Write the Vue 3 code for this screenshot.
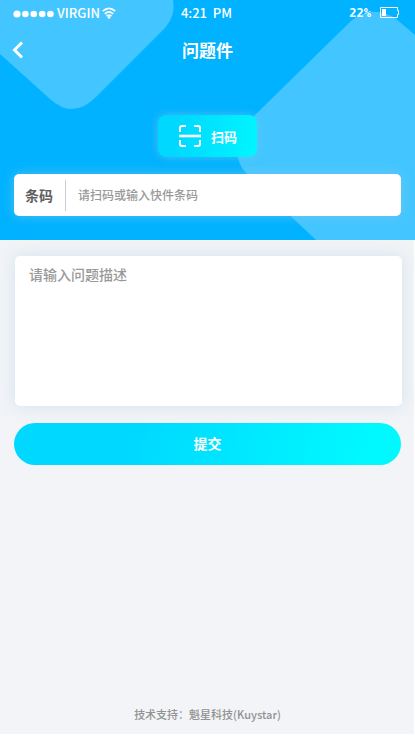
<script setup>
import { ref } from 'vue'

const barcode = ref('')
const description = ref('')
</script>

<template>
  <div class="page">
    <header class="hero">
      <svg class="hero-shapes" viewBox="0 0 415 240" preserveAspectRatio="none" aria-hidden="true">
        <path d="M0 0H173Q176 16 164 29L96 97Q73 120 50 99L0 54Z" />
        <path d="M415 35L395 18Q371 4 351 21L250 120Q229 144 242 168Q244 173 316 240H415Z" />
      </svg>

      <div class="status">
        <div class="carrier">
          <svg class="dots" width="42" height="8" viewBox="0 0 42 8" aria-hidden="true">
            <circle cx="4" cy="4" r="3.6" />
            <circle cx="12.4" cy="4" r="3.3" />
            <circle cx="20.8" cy="4" r="3.3" />
            <circle cx="29.2" cy="4" r="3.3" />
            <circle cx="37.4" cy="4" r="3.3" />
          </svg>
          <span>VIRGIN</span>
          <svg class="wifi" width="14" height="12" viewBox="0 0 14 12" aria-hidden="true">
            <path d="M0.8 4.2Q7 -1.4 13.2 4.2M2.8 6.8Q7 3 11.2 6.8M4.5 9.2Q7 7 9.5 9.2" />
            <circle cx="7" cy="10.4" r="1.3" />
          </svg>
        </div>
        <time class="time">4:21&nbsp; PM</time>
        <div class="power">
          <span class="percent">22%</span>
          <svg width="20" height="11" viewBox="0 0 20 11" aria-hidden="true">
            <path d="M.5 .5H17.5V3.5H18.5V7.5H17.5V10.5H.5Z" fill="none" stroke="#fff" />
            <path d="M2 2H6V9H2Z" fill="#fff" />
          </svg>
        </div>
      </div>

      <nav class="titlebar">
        <button class="back" type="button" aria-label="返回">
          <svg width="12" height="18" viewBox="0 0 12 18" aria-hidden="true">
            <path d="M10 1.5L2.5 9L10 16.5" />
          </svg>
        </button>
        <h1>问题件</h1>
      </nav>

      <button class="scan" type="button">
        <svg width="22" height="22" viewBox="0 0 22 22" aria-hidden="true">
          <path d="M1 7V3Q1 1 3 1H7M15 1H19Q21 1 21 3V7M1 15V19Q1 21 3 21H7M15 21H19Q21 21 21 19V15" />
          <path class="scan-line" d="M0 11H22" />
        </svg>
        <span>扫码</span>
      </button>

      <div class="barcode">
        <label for="barcode">条码</label>
        <input id="barcode" v-model="barcode" type="text" placeholder="请扫码或输入快件条码" />
      </div>
    </header>

    <main class="content">
      <textarea v-model="description" aria-label="问题描述" placeholder="请输入问题描述"></textarea>
      <button class="submit" type="button">提交</button>
      <footer>技术支持：魁星科技(Kuystar)</footer>
    </main>
  </div>
</template>

<style>
body {
  background: #fff;
}
</style>

<style scoped>
.page {
  display: flex;
  flex-direction: column;
  box-sizing: border-box;
  min-height: 100vh;
  padding-bottom: 2px;
  font-family: "Noto Sans CJK SC", sans-serif;
  color: #fff;
}

button,
input,
textarea {
  box-sizing: border-box;
  margin: 0;
  border: 0;
  font-family: inherit;
}

.hero {
  position: relative;
  display: flex;
  flex-direction: column;
  padding: 0 14px 24px;
  background: #00b2ff;
}

.hero-shapes {
  position: absolute;
  inset: 0;
  width: 100%;
  height: 100%;
  fill: #43c6ff;
}

.status,
.titlebar,
.scan,
.barcode {
  position: relative;
}

.status {
  display: grid;
  grid-template-columns: 1fr auto 1fr;
  align-items: center;
  height: 25px;
  margin: 0 1px 0 -1px;
  font-size: 13px;
  font-weight: 500;
  line-height: 20px;
}

.carrier,
.power {
  display: flex;
  align-items: center;
}

.carrier {
  gap: 2px;
}

.dots {
  margin-top: 3px;
  fill: #fff;
}

.wifi {
  fill: none;
  stroke: #fff;
  stroke-width: 1.7;
}

.wifi circle {
  fill: #fff;
  stroke: none;
}

.power {
  justify-content: flex-end;
  gap: 9px;
}

.percent {
  font-family: "DejaVu Sans Mono", monospace;
  font-size: 12px;
  font-weight: 700;
}

.titlebar {
  display: grid;
  grid-template-columns: 1fr auto 1fr;
  align-items: center;
  height: 50px;
}

.back {
  display: flex;
  justify-self: start;
  margin-left: -2px;
  padding: 0;
  background: none;
}

.back path {
  fill: none;
  stroke: #fff;
  stroke-width: 3;
}

h1 {
  margin: 0;
  font-size: 17px;
  font-weight: 700;
  line-height: 26px;
}

.scan {
  display: flex;
  align-items: center;
  align-self: center;
  gap: 10px;
  height: 42px;
  margin-top: 40px;
  padding: 0 20px 0 21px;
  border-radius: 8px;
  background: linear-gradient(100deg, #00d8ff 20%, #00f6ff);
  box-shadow: 0 0 8px rgba(120, 200, 235, 0.6);
  color: #fff;
  font-size: 13px;
  font-weight: 700;
}

.scan path {
  fill: none;
  stroke: #fff;
  stroke-width: 2;
}

.scan .scan-line {
  stroke-width: 2.6;
}

.barcode {
  display: flex;
  align-items: center;
  height: 42px;
  margin-top: 17px;
  border-radius: 5px;
  background: #fff;
  box-shadow: 0 0 12px rgba(130, 200, 230, 0.6);
}

.barcode label {
  padding: 0 12px 0 11px;
  border-right: 1px solid #ccc;
  color: #606060;
  font-size: 14px;
  font-weight: 700;
  line-height: 31px;
}

.barcode input {
  flex: 1;
  min-width: 0;
  height: 100%;
  padding: 0 12px 2px;
  background: none;
  color: #606060;
  font-size: 12px;
  font-weight: 500;
}

.content {
  display: flex;
  flex: 1;
  flex-direction: column;
  margin-right: 1px;
  padding: 16px 13px 10px 14px;
  background: #f2f4f7;
}

textarea {
  height: 150px;
  margin: 0 -1px 0 1px;
  padding: 8px 14px;
  border-radius: 5px;
  background: #fff;
  box-shadow: 0 0 16px rgba(180, 210, 230, 0.5);
  color: #606060;
  font-size: 14px;
  font-weight: 500;
  line-height: 20px;
  resize: none;
}

::placeholder {
  color: #999;
  opacity: 1;
}

.submit {
  height: 42px;
  margin-top: 17px;
  padding: 0 0 2px;
  border-radius: 21px;
  background: linear-gradient(100deg, #00d8ff 30%, #00f8ff 90%);
  color: #fff;
  font-size: 14px;
  font-weight: 700;
}

footer {
  margin-top: auto;
  color: #929292;
  font-size: 11px;
  font-weight: 500;
  line-height: 20px;
  text-align: center;
}
</style>
